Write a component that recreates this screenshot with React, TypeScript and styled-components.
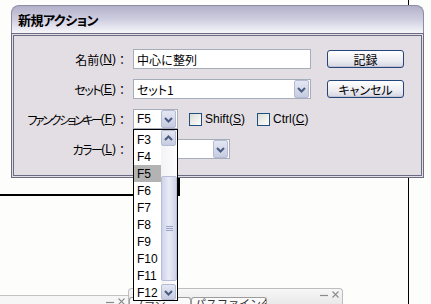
import styled, { createGlobalStyle } from "styled-components";

const Global = createGlobalStyle`
  html, body { margin: 0; padding: 0; background: #fdfefb; }
  body {
    font-family: "Liberation Sans", "Noto Sans CJK JP", sans-serif;
    font-size: 12px;
    color: #000;
  }
  * { box-sizing: border-box; }
`;

const Stage = styled.div`
  width: 431px;
  height: 304px;
  overflow: hidden;
  display: flex;
  flex-direction: column;
  background:
    linear-gradient(#000, #000) 408px 0 / 1px 100% no-repeat,
    linear-gradient(#000, #000) 0 194px / 180px 2px no-repeat,
    linear-gradient(#000, #000) 178px 170px / 2px 26px no-repeat,
    #fdfefb;
`;

const Dialog = styled.div`
  margin: 5px 0 0 11px;
  width: 413px;
  position: relative;
  z-index: 2;
`;

const TitleBar = styled.div`
  height: 28px;
  border: 1px solid #8d8ca3;
  border-bottom: none;
  border-radius: 8px 8px 0 0;
  background: linear-gradient(#b2b1ca, #cfcee0 50%, #f6f6fa);
  padding-left: 6px;
  display: flex;
  align-items: center;
  font-family: "Noto Sans CJK JP", sans-serif;
  font-feature-settings: "palt";
  font-weight: bold;
  font-size: 13px;
  letter-spacing: -0.5px;
`;

const Body = styled.div`
  height: 145px;
  border: 3px double #6b6b83;
  background: #e3dee4;
  display: flex;
  padding-top: 13px;
`;

const Fields = styled.div`
  display: grid;
  grid-template-columns: 114px 178px;
  grid-auto-rows: 20px;
  column-gap: 5px;
  row-gap: 10px;
  align-items: center;
`;

const Label = styled.label`
  display: flex;
  justify-content: flex-end;
  align-items: center;
  white-space: nowrap;
  height: 20px;
  u { text-decoration: underline; }
`;

const Kana = styled.span`
  font-family: "Noto Sans CJK JP", sans-serif;
  font-feature-settings: "palt";
  letter-spacing: ${(p: { $t?: number }) => p.$t ?? -2}px;
`;

const Colon = styled.span`
  font-family: "Noto Sans CJK JP", sans-serif;
  width: 12px;
  text-align: center;
`;

const Control = styled.div`
  display: flex;
  align-items: center;
  height: 20px;
`;

const TextBox = styled.div`
  width: 178px;
  height: 20px;
  border: 1px solid #a7aebb;
  background: #fff;
  padding-left: 3px;
  display: flex;
  align-items: center;
  font-family: "Noto Sans CJK JP", sans-serif;
`;

const Select = styled.div<{ $w: number }>`
  position: relative;
  width: ${p => p.$w}px;
  height: 20px;
  border: 1px solid #a7aebb;
  background: #fff;
  display: flex;
  align-items: center;
  padding-right: 1px;
`;

const SelectValue = styled.span<{ $jp?: boolean }>`
  flex: 1;
  padding-left: 3px;
  white-space: nowrap;
  font-family: ${p => (p.$jp ? '"Noto Sans CJK JP", sans-serif' : "inherit")};
  font-feature-settings: "palt";
`;

const ArrowBtn = styled.div<{ $h?: number; $end?: boolean }>`
  width: 15px;
  height: ${p => p.$h ?? 18}px;
  margin-top: ${p => (p.$end ? "auto" : "0")};
  border: 1px solid #b4bbd3;
  border-radius: 2px;
  background: linear-gradient(#e4e7f3, #c6cbe0);
  display: flex;
  align-items: center;
  justify-content: center;
`;

const Check = styled.span`
  width: 13px;
  height: 13px;
  border: 1px solid #1f4f7e;
  background: linear-gradient(135deg, #dcdcd6, #fefefe);
  margin: 0 3px 0 0;
`;

const CheckLabel = styled.span<{ $gap: number }>`
  display: flex;
  align-items: center;
  margin-left: ${p => p.$gap}px;
  white-space: nowrap;
`;

const Buttons = styled.div`
  display: flex;
  flex-direction: column;
  gap: 12px;
  margin: 1px 0 0 16px;
`;

const Button = styled.div`
  width: 77px;
  height: 18px;
  border: 1px solid #24457a;
  border-radius: 3px;
  background: linear-gradient(#ffffff, #ececf2 60%, #d6d6e2);
  box-shadow: inset 0 -1px 0 #c3c3d3;
  display: flex;
  align-items: center;
  justify-content: center;
  font-family: "Noto Sans CJK JP", sans-serif;
  font-feature-settings: "palt";
`;

const List = styled.div`
  position: absolute;
  top: 19px;
  left: -1px;
  width: 45px;
  height: 172px;
  border: 1px solid #000;
  background: #fff;
  display: flex;
  z-index: 3;
`;

const Items = styled.div`
  flex: 1;
  padding-top: 1px;
`;

const Item = styled.div<{ $on?: boolean }>`
  height: 17px;
  padding-left: 3px;
  display: flex;
  align-items: center;
  background: ${p => (p.$on ? "#b3b3b3" : "transparent")};
`;

const Scroll = styled.div`
  width: 16px;
  display: flex;
  flex-direction: column;
  background: linear-gradient(90deg, #f3f3f6, #fdfdfd);
`;

const Thumb = styled.div`
  margin-top: 30px;
  height: 105px;
  border: 1px solid #b7bdd7;
  border-radius: 2px;
  background: linear-gradient(90deg, #cfd3e8, #e9ebf6 50%, #cfd3e8);
  display: flex;
  align-items: center;
  justify-content: center;
`;

const Dock = styled.div`
  margin-top: auto;
  display: flex;
  align-items: flex-end;
  height: 16px;
  font-family: "Noto Sans CJK JP", sans-serif;
  font-size: 11px;
  color: #555;
`;

const PanelA = styled.div`
  width: 128px;
  height: 9px;
  border-top: 1px solid #c3c3c3;
  background: #f6f6f6;
  display: flex;
`;

const PanelB = styled.div`
  width: 215px;
  height: 16px;
  border: 1px solid #bdbdbd;
  border-bottom: none;
  border-radius: 4px 4px 0 0;
  background: linear-gradient(#f7f7f7, #e9e9e9);
  display: flex;
  align-items: flex-end;
`;

const Tab = styled.div<{ $w: number }>`
  width: ${p => p.$w}px;
  height: 7px;
  border: 1px solid #9d9d9d;
  border-bottom: none;
  border-radius: 3px 3px 0 0;
  background: #fafafa;
  overflow: hidden;
  padding-left: 3px;
  line-height: 11px;
  white-space: nowrap;
  color: #333;
`;

const WinCtl = styled.span`
  margin-left: auto;
  margin-right: 3px;
  align-self: flex-start;
  display: flex;
  gap: 4px;
  padding-top: 2px;
`;

const Chevron = ({ up }: { up?: boolean }) => (
  <svg width="9" height="7" viewBox="0 0 9 7">
    <polyline
      points={up ? "1,5 4.5,1.5 8,5" : "1,2 4.5,5.5 8,2"}
      fill="none"
      stroke="#4a5b80"
      strokeWidth="2"
    />
  </svg>
);

const Grip = () => (
  <svg width="7" height="6" viewBox="0 0 7 6">
    <path d="M0 .5h7M0 2.5h7M0 4.5h7" stroke="#9ba3c4" strokeWidth="1" />
  </svg>
);

// minimise / close glyphs of a docked palette
const PanelButtons = () => (
  <WinCtl>
    <svg width="8" height="7" viewBox="0 0 8 7">
      <path d="M0 4.5h8" stroke="#8a8a8a" strokeWidth="1.2" />
    </svg>
    <svg width="7" height="7" viewBox="0 0 7 7">
      <path d="M.5 .5l6 6M6.5 .5l-6 6" stroke="#8a8a8a" strokeWidth="1.1" />
    </svg>
  </WinCtl>
);

const keys = ["F3", "F4", "F5", "F6", "F7", "F8", "F9", "F10", "F11", "F12"];

export default function App() {
  return (
    <Stage>
      <Global />
      <Dialog>
        <TitleBar>新規アクション</TitleBar>
        <Body>
          <Fields>
            <Label><Kana $t={0}>名前</Kana>(<u>N</u>)<Colon>：</Colon></Label>
            <Control>
              <TextBox>中心に整列</TextBox>
            </Control>
            <Label><Kana $t={-1.5}>セット</Kana>(<u>E</u>)<Colon>：</Colon></Label>
            <Control>
              <Select $w={178}>
                <SelectValue $jp>セット1</SelectValue>
                <ArrowBtn><Chevron /></ArrowBtn>
              </Select>
            </Control>
            <Label><Kana $t={-2.4}>ファンクションキー</Kana>(<u>F</u>)<Colon>：</Colon></Label>
            <Control>
              <Select $w={45}>
                <SelectValue>F5</SelectValue>
                <ArrowBtn><Chevron /></ArrowBtn>
                <List>
                  <Items>
                    {keys.map(k => (
                      <Item key={k} $on={k === "F5"}>{k}</Item>
                    ))}
                  </Items>
                  <Scroll>
                    <ArrowBtn $h={16}><Chevron up /></ArrowBtn>
                    <Thumb><Grip /></Thumb>
                    <ArrowBtn $h={16} $end><Chevron /></ArrowBtn>
                  </Scroll>
                </List>
              </Select>
              <CheckLabel $gap={11}><Check />Shift(<u>S</u>)</CheckLabel>
              <CheckLabel $gap={12}><Check />Ctrl(<u>C</u>)</CheckLabel>
            </Control>
            <Label><Kana $t={-1.5}>カラー</Kana>(<u>L</u>)<Colon>：</Colon></Label>
            <Control>
              <Select $w={97}>
                <SelectValue />
                <ArrowBtn><Chevron /></ArrowBtn>
              </Select>
            </Control>
          </Fields>
          <Buttons>
            <Button>記録</Button>
            <Button>キャンセル</Button>
          </Buttons>
        </Body>
      </Dialog>
      <Dock>
        <PanelA><PanelButtons /></PanelA>
        <PanelB>
          <Tab $w={62}>ブラシ</Tab>
          <Tab $w={76}>パスファインダー</Tab>
          <PanelButtons />
        </PanelB>
      </Dock>
    </Stage>
  );
}
